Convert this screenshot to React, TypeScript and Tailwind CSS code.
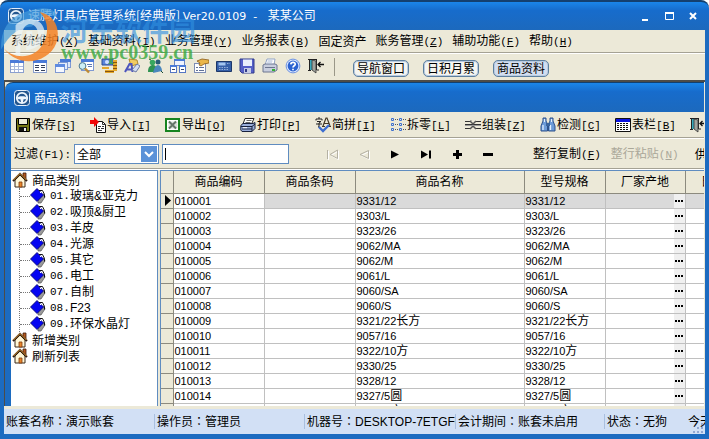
import React, { useState } from "react";
import clsx from "clsx";

interface Product {
  code: string;
  name: string;
}

interface HotItem {
  label: string;
  hotkey?: string;
}

const menus: HotItem[] = [
  { label: "系统维护", hotkey: "X" },
  { label: "基础资料", hotkey: "I" },
  { label: "业务管理", hotkey: "Y" },
  { label: "业务报表", hotkey: "B" },
  { label: "固定资产" },
  { label: "账务管理", hotkey: "Z" },
  { label: "辅助功能", hotkey: "F" },
  { label: "帮助", hotkey: "H" },
];

const windowTabs = ["导航窗口", "日积月累", "商品资料"];

const categories = [
  ["01.", "玻璃&亚克力"],
  ["02.", "吸顶&厨卫"],
  ["03.", "羊皮"],
  ["04.", "光源"],
  ["05.", "其它"],
  ["06.", "电工"],
  ["07.", "自制"],
  ["08.", "F23"],
  ["09.", "环保水晶灯"],
];

const products: Product[] = [
  { code: "010001", name: "9331/12" },
  { code: "010002", name: "9303/L" },
  { code: "010003", name: "9323/26" },
  { code: "010004", name: "9062/MA" },
  { code: "010005", name: "9062/M" },
  { code: "010006", name: "9061/L" },
  { code: "010007", name: "9060/SA" },
  { code: "010008", name: "9060/S" },
  { code: "010009", name: "9321/22长方" },
  { code: "010010", name: "9057/16" },
  { code: "010011", name: "9322/10方" },
  { code: "010012", name: "9330/25" },
  { code: "010013", name: "9328/12" },
  { code: "010014", name: "9327/5圆" },
  { code: "010015", name: "9327/5方" },
];

const columns = ["商品编码", "商品条码", "商品名称", "型号规格", "厂家产地", "日期"];

const mono = "font-['Liberation_Mono','Noto_Sans_CJK_SC',monospace] text-[11px]";
const latin = "font-['Liberation_Sans','Noto_Sans_CJK_SC',sans-serif]";

/* ----------------------------- Small helpers ----------------------------- */

function HotLabel({ label, hotkey, square }: HotItem & { square?: boolean }) {
  return (
    <span className="whitespace-nowrap">
      {label}
      {hotkey && (
        <span className={mono}>
          {square ? "[" : "("}
          <u className="underline-offset-1">{hotkey}</u>
          {square ? "]" : ")"}
        </span>
      )}
    </span>
  );
}

// Keeps digits narrow and the Chinese characters at full size
function CodeText({ text }: { text: string }) {
  return (
    <>
      {text.split(/([\u4e00-\u9fa5]+)/).map((part, i) => (
        <span key={i} className={i % 2 ? "text-[12px]" : "text-[11px]"}>
          {part}
        </span>
      ))}
    </>
  );
}

// The TC face has the full-width colon in the middle of its box
function StatusText({ name, value }: { name: string; value: string }) {
  return (
    <>
      {name}
      <span className="font-['Noto_Sans_CJK_TC',sans-serif]" lang="zh-TW">：</span>
      {value}
    </>
  );
}

function Icon({ children }: { children: React.ReactNode }) {
  return (
    <svg className="h-4 w-4 shrink-0" viewBox="0 0 16 16" fill="none" aria-hidden="true">
      {children}
    </svg>
  );
}

/* ----------------------------- Icons ----------------------------- */

const WheelIcon = () => (
  <Icon>
    <rect x=".5" y=".5" width="15" height="15" rx="3" fill="#24568f" stroke="#e4eefa" />
    <circle cx="8" cy="8" r="5.2" stroke="#eef5fd" strokeWidth="1.8" />
    <path d="M3 7.5C5 5.8 11 5.8 13 7.5L12.5 9.3 9.6 9.2 8.8 13H7.2L6.4 9.2 3.5 9.3Z" fill="#eef5fd" />
  </Icon>
);

const GridIcon = () => (
  <Icon>
    <rect x="1.5" y="2.5" width="13" height="12" fill="#fff" stroke="#8a9fce" />
    <path d="M1 2h14v3H1z" fill="#4a7ad8" />
    <path d="M2 8.5h12M2 11.5h12M5.5 5v9M9.5 5v9" stroke="#a9b9dc" />
  </Icon>
);

const FormIcon = () => (
  <Icon>
    <rect x="1.5" y="2.5" width="13" height="12" fill="#fff" stroke="#8a9fce" />
    <path d="M1 2h14v3H1z" fill="#4a7ad8" />
    <path d="M3 7.5h4M9 7.5h4M3 9.5h4M9 9.5h4M3 12.5h4M9 12.5h4" stroke="#34405c" />
  </Icon>
);

const CascadeIcon = () => (
  <Icon>
    <rect x="5.5" y="1.5" width="10" height="8" fill="#dde7fa" stroke="#7f99d2" />
    <path d="M5 1h11v3H5z" fill="#4a7ad8" />
    <rect x="3.5" y="4.5" width="9" height="7" fill="#e4ecfb" stroke="#7f99d2" />
    <rect x=".5" y="6.5" width="9" height="8" fill="#f5f8ff" stroke="#7f99d2" />
    <path d="M0 6h10v3H0z" fill="#5f8be0" />
  </Icon>
);

const SearchFormIcon = () => (
  <Icon>
    <rect x="3.5" y="1.5" width="12" height="11" fill="#fff" stroke="#7f99d2" />
    <path d="M3 1h13v3H3z" fill="#4a7ad8" />
    <path d="M9 6.5h5M10 8.5h4" stroke="#5e79b5" />
    <circle cx="4.5" cy="8" r="3.4" fill="#cdeef5" stroke="#4c7890" />
    <path d="M7 10.5l4 4" stroke="#bd8a33" strokeWidth="2.4" />
  </Icon>
);

const MoneyIcon = () => (
  <Icon>
    <path d="M1 1h11v6H1z" fill="#5b84d9" stroke="#2c4d95" />
    <circle cx="6" cy="4" r="2" fill="#cfe0ff" />
    <path d="M12 2h4v11h-4zM1 9h7v2H1zM4 12h9v3H4z" fill="#e5a82b" />
    <path d="M12 4.5h4M12 7.5h4M12 10.5h4M4 13.5h9" stroke="#865511" />
  </Icon>
);

const FontIcon = () => (
  <Icon>
    <path d="M5 1l8 1 1 4-7 2z" fill="#f1cc63" stroke="#b08a2c" />
    <path d="M1 14L5.5 6h2l1 8M3 11.5h5" stroke="#4c55bd" strokeWidth="2" />
    <path d="M8 12l5-6 3 2-4 6z" fill="#d4def3" stroke="#6a7aa5" />
  </Icon>
);

const UsersIcon = () => (
  <Icon>
    <circle cx="5.5" cy="4.5" r="2.8" fill="#39a85f" />
    <path d="M1 14c0-5 2-7 5-7s4 3 5 7z" fill="#2f9252" />
    <circle cx="11" cy="4" r="2.5" fill="#285c75" />
    <path d="M6 15c1-5 3-8 5-8s4 3 4 6z" fill="#4a87bd" />
    <path d="M4 2L2 1M14 13l2 2" stroke="#1d4e35" />
  </Icon>
);

const LinkedIcon = () => (
  <Icon>
    <rect x="4.5" y="1.5" width="10" height="6" fill="#eef3ff" stroke="#6d85bd" />
    <path d="M4 1h11v2H4z" fill="#4a7ad8" />
    <rect x=".5" y="7.5" width="6" height="7" fill="#fff" stroke="#5476c4" />
    <rect x="9.5" y="7.5" width="6" height="7" fill="#fff" stroke="#5476c4" />
    <path d="M0 7h7v2H0zM9 7h7v2H9z" fill="#4a7ad8" />
    <path d="M2 11.5h3M11 11.5h3" stroke="#37466b" />
  </Icon>
);

const HandFormIcon = () => (
  <Icon>
    <rect x="1.5" y="5.5" width="11" height="9" fill="#fff" stroke="#7d8db4" />
    <path d="M3 9.5h2M6 9.5h5M3 12.5h2M6 12.5h5" stroke="#5f6f95" />
    <path d="M4 3l5-2 7 1v3l-5 1-3 2-2-1 1-2z" fill="#eab64a" stroke="#8a5a17" strokeWidth=".8" />
  </Icon>
);

const RegisterIcon = () => (
  <Icon>
    <path d="M.5 3.5h15v10H.5z" fill="#355fa8" stroke="#1d3768" />
    <path d="M2.5 4.5h7v3h-7z" fill="#a4c5ef" />
    <path d="M11 5.5h3M3 9.5h10M3 11.5h10" stroke="#91acd9" strokeDasharray="1.5 1" />
  </Icon>
);

const DiskIcon = () => (
  <Icon>
    <path d="M1 1h14v14H3l-2-2z" fill="#5560c8" stroke="#313a8a" />
    <path d="M4 1.5h9V8H4z" fill="#e9effc" />
    <path d="M5 10h7v5H5z" fill="#c5cce6" />
    <path d="M6 11h2v3H6z" fill="#313a8a" />
  </Icon>
);

const PrinterIcon = () => (
  <Icon>
    <path d="M5 1h8l-1 6H3z" fill="#fff" stroke="#93a5c7" />
    <path d="M1 7l2-1h10l2 1v5l-3 2H1z" fill="#c8cede" stroke="#6d7690" />
    <path d="M3 9.5h10" stroke="#6d7690" />
    <path d="M10 11h3v2h-3z" fill="#32b232" />
    <path d="M5.5 3h5M5 5h5" stroke="#a6b7d5" />
  </Icon>
);

const HelpIcon = () => (
  <Icon>
    <circle cx="8" cy="8" r="6.9" fill="#dbe8ff" stroke="#6d92e0" />
    <circle cx="8" cy="8" r="5.4" fill="#2b62d0" />
    <path d="M5.8 6.4C6 3.6 10.4 3.9 10.2 6.3 10 7.8 8 7.8 8 9.6M8 10.8v1.5" stroke="#fff" strokeWidth="1.7" />
  </Icon>
);

const ExitIcon = () => (
  <Icon>
    <path d="M0 1.5h9M1.5 1v11M8.5 1v11H11M0 12.5h3" stroke="#222" />
    <path d="M2 2h3v10H2z" fill="#39a9bb" />
    <path d="M4 2l4 1v12l-4-3z" fill="#a0a39e" stroke="#333" strokeWidth=".8" />
    <path d="M10 6.5h6M12.5 4L10 6.5 12.5 9" stroke="#111" strokeWidth="1.3" />
  </Icon>
);

const SaveIcon = () => (
  <Icon>
    <path d="M1.5 1.5h13v13h-12l-1-1z" fill="#777816" stroke="#000" />
    <path d="M3.5 1.5h9v6h-9z" fill="#eeecd9" stroke="#000" />
    <path d="M4 10h8v4H4z" fill="#111" />
    <path d="M9 11h2v3H9z" fill="#eee" />
  </Icon>
);

const ImportIcon = () => (
  <Icon>
    <path d="M6.5 4.5h6l3 3v8h-9z" fill="#fff" stroke="#111" />
    <path d="M12.5 4.5v3h3M8 9.5h3M12 9.5h2M8 11.5h2M11 11.5h3M8 13.5h4" stroke="#333" />
    <path d="M0 3h4V0l5 5-5 5V7H0z" fill="#f00808" />
  </Icon>
);

const ExportIcon = () => (
  <Icon>
    <rect x="1" y="2" width="13" height="12" fill="#fff" stroke="#168420" strokeWidth="2" />
    <path d="M3.5 4.5h9v7h-9z" fill="#d9dfda" />
    <path d="M4 4.5l7 7M11 4.5l-7 7" stroke="#65756a" strokeWidth="2" />
  </Icon>
);

const PrintIcon = () => (
  <Icon>
    <path d="M5 1.5h9L11.5 7H3z" fill="#fff" stroke="#222" />
    <path d="M6.5 3.5h5M5.5 5.5h5" stroke="#666" />
    <path d="M.8 8.5L3 6.5h10l2-1v6L12 14.5H2l-1.2-1.5z" fill="#9aaedb" stroke="#17213d" />
    <path d="M1 9.5h11L15 7M2 12h10M12 9.5v5" stroke="#17213d" />
    <path d="M3 10.7h4" stroke="#fff" />
  </Icon>
);

const SpellIcon = () => (
  <Icon>
    <path d="M1 3.5V2h6v1.5M4 0v2M2 4.5h4L4 6M1 7h6M4 6v4H3" stroke="#222" />
    <path d="M8 9l3-8h1l3 8M9.5 6.5h4M7 9.5h3M13 9.5h3" stroke="#433827" strokeWidth="1.2" />
    <path d="M4 10l4 4 6-6" stroke="#3d6ed0" strokeWidth="2.4" />
  </Icon>
);

const SplitIcon = () => (
  <Icon>
    {[1.5, 6.5, 11.5].map((y) => (
      <g key={y}>
        <path d={`M1.5 ${y}h2v2h-2zM9.5 ${y}h2v2h-2z`} stroke="#3e70cf" />
        <path d={`M5 ${y + 1}h3M13 ${y + 1}h3`} stroke="#555" strokeDasharray="1 1" />
      </g>
    ))}
  </Icon>
);

const AssembleIcon = () => (
  <Icon>
    <path d="M0 4.5h5l1-1M0 7.5h16M0 11.5h5M10 4.5h6M10 11.5h6" stroke="#333" />
    <path d="M5 4l3 3 3-3M5 12l3-3 3 3" stroke="#555" strokeWidth="1.5" />
    <path d="M0 8.5h16" stroke="#999" />
  </Icon>
);

const BinocularIcon = () => (
  <Icon>
    <path d="M3 1h3v3l1.5 3v7H1V9l2-5zM10 1h3v3l2 5v5H8.5V7L10 4z" fill="#6d9bd8" stroke="#2d518b" />
    <path d="M3 8v5M10.500 8v5M4.5 2v3M11.5 2v3" stroke="#e4f0fd" strokeWidth="1.3" />
    <path d="M6 6h4v3H6z" fill="#3b659e" />
  </Icon>
);

const ColumnsIcon = () => (
  <Icon>
    <path d="M.5 1.5h15v13H.5z" fill="#fff" stroke="#111" />
    <path d="M1 2h14v3H1z" fill="#0a12e0" />
    <path d="M2 6.5h12M2 8.5h12M2 10.5h12M2 12.5h12" stroke="#111" strokeDasharray="2 1" />
  </Icon>
);

const HouseIcon = () => (
  <Icon>
    <path d="M11 1h3v6h-3z" fill="#b65a20" stroke="#3f1d0a" strokeWidth=".8" />
    <path d="M3 8l5-5 5 5v7H3z" fill="#fff6d5" stroke="#38291a" />
    <path d="M1 9l7-7 7 7" stroke="#2e1b10" strokeWidth="2" />
    <path d="M1.5 8L8 1.5 14.500 8" stroke="#e3a13a" />
    <path d="M7 10h3v5H7z" fill="#e8842a" stroke="#7f3a0c" strokeWidth=".8" />
  </Icon>
);

const TagIcon = () => (
  <Icon>
    <path d="M8 10l6-4 1 3-4 6H8z" fill="#999" stroke="#555" strokeWidth=".7" />
    <path d="M7 .5L13.500 7 7 13.500.5 7z" fill="#0505f2" stroke="#000064" strokeWidth=".8" />
    <path d="M9 2.5h3.500l2 4v3" stroke="#111" />
    <path d="M10 4.5h1" stroke="#fff" />
  </Icon>
);

const toolIcons = [
  { name: "表格", icon: GridIcon },
  { name: "表单", icon: FormIcon },
  { name: "层叠", icon: CascadeIcon },
  { name: "查询", icon: SearchFormIcon },
  { name: "收款", icon: MoneyIcon },
  { name: "字体", icon: FontIcon },
  { name: "用户", icon: UsersIcon },
  { name: "关联", icon: LinkedIcon },
  { name: "属性", icon: HandFormIcon },
  { name: "收银", icon: RegisterIcon },
  { name: "保存", icon: DiskIcon },
  { name: "打印", icon: PrinterIcon },
  { name: "帮助", icon: HelpIcon },
  { name: "退出", icon: ExitIcon },
];

const actions = [
  { label: "保存", hotkey: "S", icon: SaveIcon },
  { label: "导入", hotkey: "I", icon: ImportIcon },
  { label: "导出", hotkey: "O", icon: ExportIcon },
  { label: "打印", hotkey: "P", icon: PrintIcon },
  { label: "简拼", hotkey: "I", icon: SpellIcon },
  { label: "拆零", hotkey: "L", icon: SplitIcon },
  { label: "组装", hotkey: "Z", icon: AssembleIcon },
  { label: "检测", hotkey: "C", icon: BinocularIcon },
  { label: "表栏", hotkey: "B", icon: ColumnsIcon },
];

const navButtons = [
  { name: "首条", d: "M2.5 4v9M12.5 4v8.500L5 8.500z", off: true },
  { name: "上条", d: "M12.5 4.5v8L4 8.500z", off: true },
  { name: "下条", d: "M4 4.5v8l8-4z" },
  { name: "末条", d: "M3 4.5v8l7-4zM11 4.5h2v8h-2z" },
  { name: "新增", d: "M7 4h3v3h3v3h-3v3H7v-3H4V7h3z" },
  { name: "删除", d: "M3 7h10v3H3z" },
];

/* ----------------------------- Sections ----------------------------- */

function TitleBar() {
  return (
    <header className="flex h-[30px] shrink-0 items-center rounded-t-lg border-t-2 border-[#14406f] bg-linear-to-b from-[#1a86ea] via-[#176ccc] via-30% to-[#1c69bd] px-2 text-white">
      <WheelIcon />
      <h1 className="ml-1 flex-1 whitespace-nowrap">
        速腾灯具店管理系统[经典版]{" "}
        <span className="font-['DejaVu_Sans',sans-serif] text-[11px]">Ver20.0109&nbsp; -&nbsp; &nbsp;</span>
        某某公司
      </h1>
      <div className="flex gap-2">
        <button type="button" aria-label="最小化">
          <Icon><path d="M5 11h6v2H5z" fill="#fff" /></Icon>
        </button>
        <button type="button" aria-label="最大化">
          <Icon><path d="M4.5 4.5h8v7h-8z" stroke="#fff" /><path d="M4 4h9v2H4z" fill="#fff" /></Icon>
        </button>
        <button type="button" aria-label="关闭">
          <Icon><path d="M5 5l6 6M11 5l-6 6" stroke="#fff" strokeWidth="2" /></Icon>
        </button>
      </div>
    </header>
  );
}

function MenuBar() {
  return (
    <nav className="flex h-[23px] shrink-0 items-center gap-[9px] border-b border-[#a5a294] px-[7px]">
      {menus.map((m) => (
        <button key={m.label} type="button">
          <HotLabel {...m} />
        </button>
      ))}
    </nav>
  );
}

function ToolBar() {
  return (
    <div className="flex h-[27px] shrink-0 items-center border-t border-white px-[5px]">
      <div className="flex gap-[7px] pr-2.5 pb-0.5">
        {toolIcons.map(({ name, icon: ToolIcon }) => (
          <button key={name} type="button" aria-label={name}>
            <ToolIcon />
          </button>
        ))}
      </div>
      <div className="h-[18px] border-l border-[#9a9788]" />
      <div className="ml-[18px] flex gap-[14px] pt-0.5">
        {windowTabs.map((tab) => (
          <button
            key={tab}
            type="button"
            className={clsx(
              "h-[17px] w-14 rounded-[5px] border border-[#5d7f9e] text-center leading-[14px] shadow-[inset_0_0_0_1px_#b9cbe0]",
              tab === "商品资料" ? "bg-[#d3def0]" : "bg-[#f5f5f0]"
            )}
          >
            {tab}
          </button>
        ))}
      </div>
    </div>
  );
}

function FilterBar() {
  const [keyword, setKeyword] = useState("");

  return (
    <div className="flex h-[31px] shrink-0 items-center border-t border-b border-t-white border-b-[#a5a294] pl-[3px]">
      <label htmlFor="filter" className="w-[60px] shrink-0 whitespace-nowrap">
        过滤<span className={mono}>(F1):</span>
      </label>
      <div className="relative w-[85px] shrink-0">
        <select id="filter" className="h-5 w-full appearance-none border border-[#5f8cc0] bg-white px-0.5 leading-[18px]">
          <option>全部</option>
        </select>
        <svg className="pointer-events-none absolute top-0.5 right-0.5 h-4 w-4" viewBox="0 0 16 16" aria-hidden="true">
          <path d="M0 0h16v16H0z" fill="#5b92d8" />
          <path d="M4 6l4 4 4-4" fill="none" stroke="#fff" strokeWidth="2" />
        </svg>
      </div>
      <div className="relative ml-[3px] w-[127px] shrink-0">
        <input
          aria-label="过滤内容"
          value={keyword}
          onChange={(e) => setKeyword(e.target.value)}
          className="block h-5 w-full border border-[#5f8cc0] bg-white px-1 outline-none"
        />
        <div className="pointer-events-none absolute top-1 left-[3px] h-3 w-px bg-black" />
      </div>
      <div className="ml-9 flex shrink-0 gap-[15px]">
        {navButtons.map((b) => (
          <button key={b.name} type="button" aria-label={b.name} disabled={b.off}>
            <Icon>
              {b.off ? (
                <>
                  <path d={b.d} stroke="#fff" transform="translate(1 1)" />
                  <path d={b.d} stroke="#b4b1a3" />
                </>
              ) : (
                <path d={b.d} fill="#000" />
              )}
            </Icon>
          </button>
        ))}
      </div>
      <div className="ml-[37px] flex shrink-0 gap-[10px]">
        <button type="button"><HotLabel label="整行复制" hotkey="F" /></button>
        <button type="button" disabled className="text-[#aaa799]"><HotLabel label="整行粘贴" hotkey="N" /></button>
        <button type="button" className="ml-1.5"><HotLabel label="供" /></button>
      </div>
    </div>
  );
}

function CategoryTree() {
  return (
    <aside className="w-[147px] shrink-0 overflow-hidden border-t border-r border-[#5f8cc0] bg-white pt-px">
      <div className="flex h-4 items-center gap-1 pl-px">
        <HouseIcon />
        商品类别
      </div>
      <ul className="ml-2 border-l border-dotted border-[#777]">
        {categories.map(([no, name]) => (
          <li key={no} className="flex h-4 items-center whitespace-nowrap">
            <div className="w-2.5 border-t border-dotted border-[#777]" />
            <TagIcon />
            <span className={`${mono} ml-1 w-5 shrink-0`}>{no}</span>
            <span className={latin}>{name}</span>
          </li>
        ))}
      </ul>
      {["新增类别", "刷新列表"].map((name) => (
        <div key={name} className="flex h-4 items-center gap-1 pl-px">
          <HouseIcon />
          {name}
        </div>
      ))}
    </aside>
  );
}

function ProductTable() {
  const [current, setCurrent] = useState(0);

  return (
    <div className="min-w-0 flex-1 overflow-hidden border-t border-l border-[#5f8cc0] bg-white">
      <table className={`w-[580px] table-fixed border-collapse ${latin}`}>
        <colgroup>
          <col className="w-3" />
          <col className="w-[91px]" />
          <col className="w-[91px]" />
          <col className="w-[169px]" />
          <col className="w-[81px]" />
          <col className="w-20" />
          <col className="w-14" />
        </colgroup>
        <thead>
          <tr className="h-[22px] bg-[#ece9d8]">
            <th className="border-r border-b border-[#8c8a7e]" />
            {columns.map((c) => (
              <th key={c} className="border-r border-b border-[#8c8a7e] p-0 font-normal">
                {c}
              </th>
            ))}
          </tr>
        </thead>
        <tbody>
          {products.map((p, i) => {
            const cell = clsx(
              "overflow-hidden border-r border-b border-[#c0c0c0] p-0 pl-px whitespace-nowrap",
              i === current && "bg-[#dadada]"
            );
            return (
              <tr key={p.code} className="h-[15px] leading-[14px]" onClick={() => setCurrent(i)}>
                <td className="border-r border-b border-[#8c8a7e] bg-[#ece9d8] p-0">
                  {i === current && (
                    <svg className="ml-1 h-[11px] w-1.5" viewBox="0 0 6 11" aria-hidden="true">
                      <path d="M0 0l6 5.5L0 11z" />
                    </svg>
                  )}
                </td>
                <td className="border-r border-b border-[#c0c0c0] p-0 pl-px">
                  <CodeText text={p.code} />
                </td>
                <td className={cell} />
                <td className={cell}><CodeText text={p.name} /></td>
                <td className={cell}><CodeText text={p.name} /></td>
                <td className={cell}>
                  <button type="button" aria-label="选择厂家" className="ml-auto flex h-[14px] w-[11px] items-center justify-center gap-px bg-[#f0f0f0]">
                    <span className="h-0.5 w-0.5 bg-black" />
                    <span className="h-0.5 w-0.5 bg-black" />
                    <span className="h-0.5 w-0.5 bg-black" />
                  </button>
                </td>
                <td className={cell} />
              </tr>
            );
          })}
        </tbody>
      </table>
    </div>
  );
}

function StatusBar() {
  const cell = "shrink-0 overflow-hidden border-r border-[#a9bfdf] pl-0.5 whitespace-nowrap";
  return (
    <footer className={`flex h-7 shrink-0 items-center overflow-hidden border-t-[3px] border-[#ece9d8] bg-[#d2e0f5] leading-[14px] ${latin}`}>
      <div className={`${cell} w-[151px]`}><StatusText name="账套名称" value="演示账套" /></div>
      <div className={`${cell} w-[150px]`}><StatusText name="操作员" value="管理员" /></div>
      <div className={`${cell} w-[151px]`}><StatusText name="机器号" value="DESKTOP-7ETGF0" /></div>
      <div className={`${cell} w-[149px]`}><StatusText name="会计期间" value="账套未启用" /></div>
      <div className={`${cell} w-[81px] border-r-0`}><StatusText name="状态" value="无狗" /></div>
      <div className="min-w-0 flex-1 overflow-hidden pl-0.5 whitespace-nowrap">今天</div>
      <svg className="-ml-3 h-3 w-3 shrink-0 self-end" viewBox="0 0 12 12" aria-hidden="true">
        <path d="M8 1h2v2H8zM4 5h2v2H4zM8 5h2v2H8zM0 9h2v2H0zM4 9h2v2H4zM8 9h2v2H8z" fill="#92a8d3" />
      </svg>
    </footer>
  );
}

function Watermark() {
  return (
    <div className="pointer-events-none absolute top-1.5 left-0 flex" aria-hidden="true">
      <svg className="h-[60px] w-[61px] shrink-0" viewBox="0 4 51 50">
        <path d="M1 40C0 18 14 8 34 6C43 5 47 9 48 13C38 10 30 14 27 21C16 21 8 28 1 40Z" fill="#459bdb" opacity=".7" />
        <path d="M13 48V20C20 12 35 13 37 24C38 34 31 40 22 41V25H27V36C34 31 33 20 25 19C18 20 17 29 17 50Z" fill="#eef5f8" opacity=".7" />
        <path d="M3 39C10 48 28 49 35 37C42 27 40 15 33 9C46 12 51 23 47 35C41 51 16 57 3 39Z" fill="#f48326" opacity=".85" />
      </svg>
      <div className="pt-2.5">
        <div className="text-[27px] leading-[27px] font-bold whitespace-nowrap text-[#308fe0]/65">河东软件园</div>
        <div className="font-['Liberation_Serif',serif] text-[20px] leading-[18px] font-bold text-[#35a73d]/80">www.pc0359.cn</div>
      </div>
    </div>
  );
}

export default function App() {
  return (
    <div className="relative flex h-screen flex-col overflow-hidden bg-white font-['Noto_Sans_CJK_SC',sans-serif] text-[12px] leading-4 text-black">
      <TitleBar />
      <div className="flex min-h-0 flex-1 flex-col border-x-4 border-b-[5px] border-[#1c6bc0] bg-[#ece9d8]">
        <MenuBar />
        <ToolBar />
        <main className="flex min-h-0 flex-1 flex-col border-t-2 border-l border-[#4d4c48] pr-px">
          <div className="flex h-[30px] shrink-0 items-center gap-1 rounded-tl-lg border-t border-[#12406f] bg-linear-to-b from-[#1a86ea] via-[#176ccc] via-30% to-[#1c69bd] px-[9px] text-white">
            <WheelIcon />
            <h2>商品资料</h2>
          </div>
          <div className="flex min-h-0 flex-1 flex-col border-l-[6px] border-[#1c6bc0]">
            <div className="flex h-[26px] shrink-0 items-center overflow-hidden border-b border-[#a5a294] pl-1">
              {actions.map(({ label, hotkey, icon: ActionIcon }) => (
                <button key={label} type="button" className="flex w-[75px] shrink-0 items-center gap-px">
                  <ActionIcon />
                  <HotLabel label={label} hotkey={hotkey} square />
                </button>
              ))}
              <button type="button" aria-label="退出" className="shrink-0">
                <ExitIcon />
              </button>
            </div>
            <div className="min-w-0 overflow-hidden">
              <FilterBar />
            </div>
            <div className="flex min-h-0 flex-1 gap-0.5 border-t border-white">
              <CategoryTree />
              <ProductTable />
            </div>
          </div>
        </main>
        <StatusBar />
      </div>
      <Watermark />
    </div>
  );
}
